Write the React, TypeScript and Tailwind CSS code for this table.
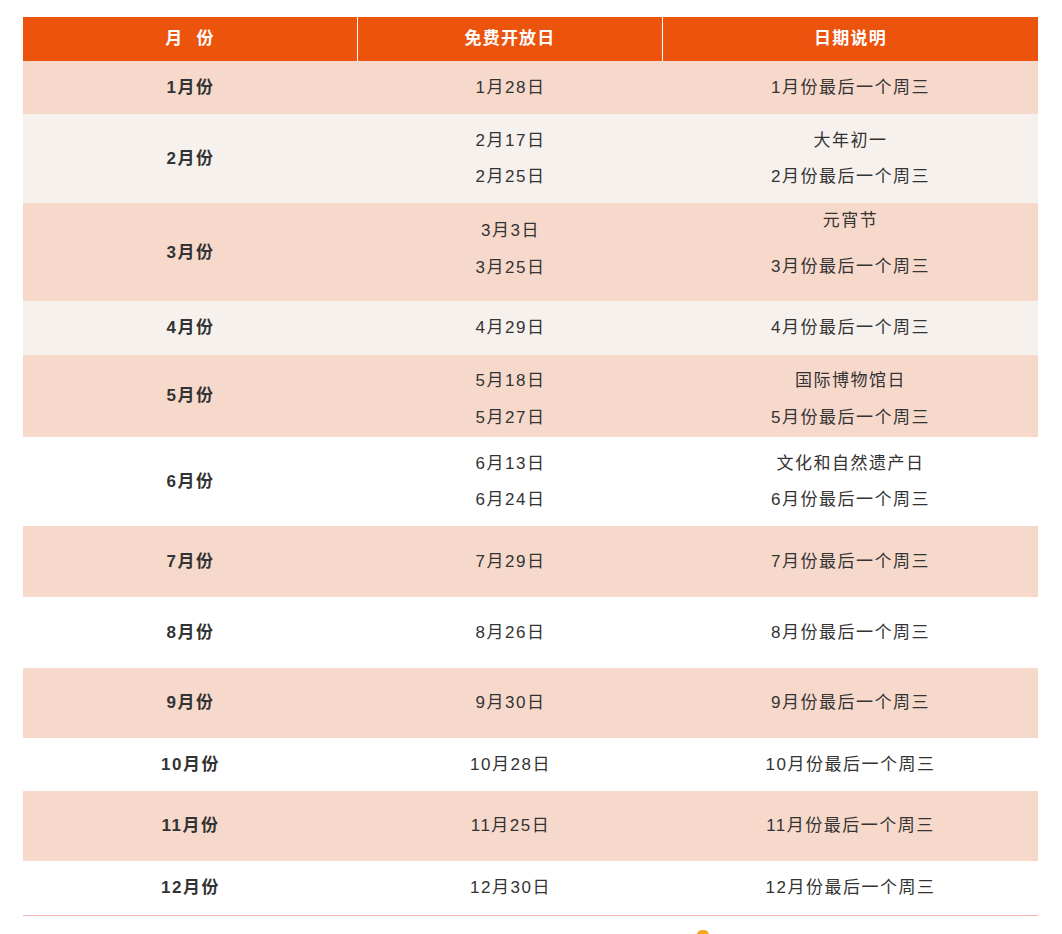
import React from "react";

type Row = {
  month: string;
  dates: string[];
  notes: string[];
  h: number;
  bg: string;
  datesCls?: string;
  notesCls?: string;
  notesGap?: string;
};

const PINK = "bg-[#f7d9cc]";
const LIGHT = "bg-[#f7f1ee]";
const WHITE = "bg-white";

const rows: Row[] = [
  { month: "1月份", dates: ["1月28日"], notes: ["1月份最后一个周三"], h: 53, bg: PINK },
  { month: "2月份", dates: ["2月17日", "2月25日"], notes: ["大年初一", "2月份最后一个周三"], h: 89, bg: LIGHT },
  {
    month: "3月份",
    dates: ["3月3日", "3月25日"],
    notes: ["元宵节", "3月份最后一个周三"],
    h: 98,
    bg: PINK,
    datesCls: "pb-[9px] leading-[37px]",
    notesCls: "pb-[18px] leading-[36px]",
    notesGap: "gap-[10px]",
  },
  { month: "4月份", dates: ["4月29日"], notes: ["4月份最后一个周三"], h: 54, bg: LIGHT },
  {
    month: "5月份",
    dates: ["5月18日", "5月27日"],
    notes: ["国际博物馆日", "5月份最后一个周三"],
    h: 82,
    bg: PINK,
    datesCls: "pt-[5px] leading-[37px]",
    notesCls: "pt-[5px] leading-[37px]",
  },
  { month: "6月份", dates: ["6月13日", "6月24日"], notes: ["文化和自然遗产日", "6月份最后一个周三"], h: 89, bg: WHITE },
  { month: "7月份", dates: ["7月29日"], notes: ["7月份最后一个周三"], h: 71, bg: PINK },
  { month: "8月份", dates: ["8月26日"], notes: ["8月份最后一个周三"], h: 71, bg: WHITE },
  { month: "9月份", dates: ["9月30日"], notes: ["9月份最后一个周三"], h: 70, bg: PINK },
  { month: "10月份", dates: ["10月28日"], notes: ["10月份最后一个周三"], h: 53, bg: WHITE },
  { month: "11月份", dates: ["11月25日"], notes: ["11月份最后一个周三"], h: 70, bg: PINK },
  { month: "12月份", dates: ["12月30日"], notes: ["12月份最后一个周三"], h: 54, bg: WHITE },
];

function Cell({ lines, cls, gap, bold }: { lines: string[]; cls?: string; gap?: string; bold?: boolean }) {
  return (
    <div
      className={`flex flex-col items-center justify-center ${gap ?? ""} ${cls ?? "leading-[36px]"} ${
        bold ? "font-bold" : ""
      }`}
    >
      {lines.map((l, i) => (
        <div key={i}>{l}</div>
      ))}
    </div>
  );
}

export default function App() {
  return (
    <div
      className="w-[1062px] h-[934px] bg-white overflow-hidden pt-[17px] pl-[23px] text-[#333] text-[17px] tracking-[1.5px]"
      style={{ fontFamily: '"Liberation Sans", "Noto Sans CJK SC", sans-serif' }}
    >
      <div className="w-[1015px]">
        <div className="grid grid-cols-[335px_305px_375px] h-[44px] bg-[#ec540e] text-white font-bold tracking-[1.2px]">
          <div className="flex items-center justify-center border-r border-white">
            <span>月</span>
            <span className="inline-block w-[13px]" />
            <span>份</span>
          </div>
          <div className="flex items-center justify-center border-r border-white">免费开放日</div>
          <div className="flex items-center justify-center">日期说明</div>
        </div>
        {rows.map((r, i) => (
          <div
            key={i}
            className={`grid grid-cols-[335px_305px_375px] ${r.bg}`}
            style={{ height: r.h }}
          >
            <Cell lines={[r.month]} bold />
            <Cell lines={r.dates} cls={r.datesCls} />
            <Cell lines={r.notes} cls={r.notesCls} gap={r.notesGap} />
          </div>
        ))}
        <div className="h-px bg-[#f2b4ae]" />
        <div className="relative h-[20px]">
          <div className="absolute left-[674px] top-[14px] w-[12px] h-[10px] rounded-full bg-[#f5a623]" />
        </div>
      </div>
    </div>
  );
}
